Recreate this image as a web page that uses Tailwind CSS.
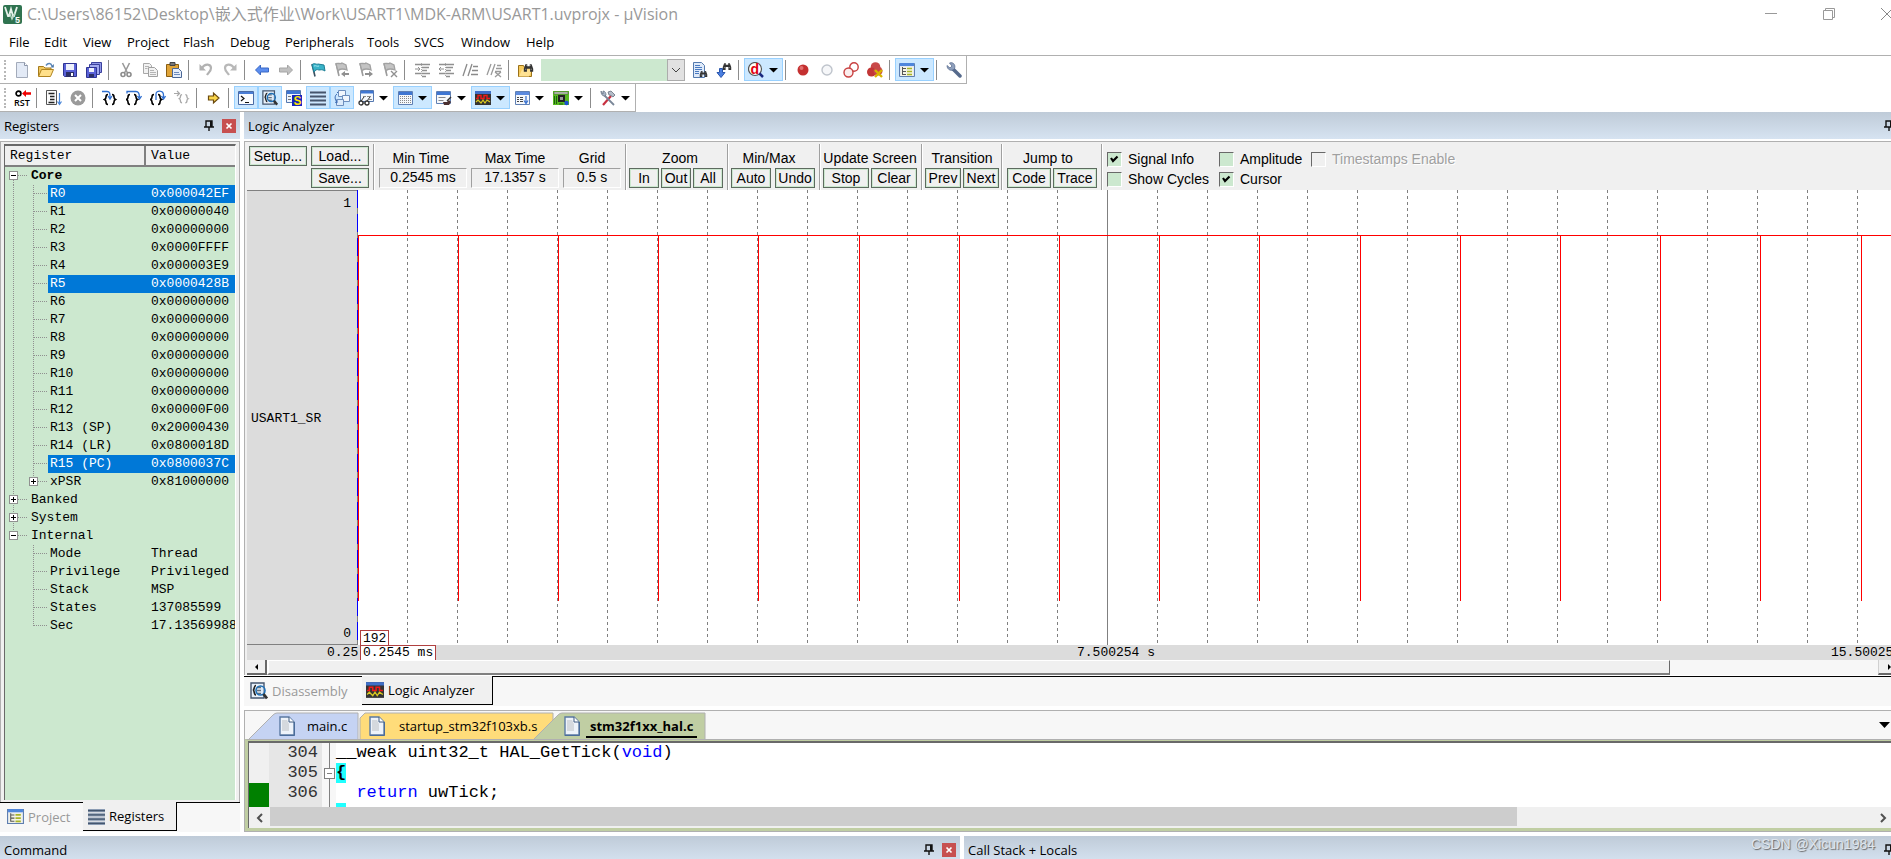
<!doctype html>
<html lang="en">
  <head>
    <meta charset="UTF-8" />
    <meta name="viewport" content="width=device-width, initial-scale=1.0" />
    <title>USART1.uvprojx - µVision</title>
    <script src="https://cdn.jsdelivr.net/npm/@tailwindcss/browser@4"></script>
  </head>
  <body
    class="flex h-screen flex-col overflow-hidden bg-white font-['Open_Sans','Noto_Sans_CJK_SC',sans-serif] text-[13px] leading-5 text-black"
  >
    <!-- Icon sprite -->
    <svg class="hidden">
      <symbol id="i-arrow" viewBox="0 0 15 16"><path d="M5 6h9l-4.500 4.500z" fill="#000" /></symbol>
      <symbol id="i-pin" viewBox="0 0 10 12"><path d="M2 1h6v6H2zM0 7h10M5 7v4" fill="none" stroke="#111" stroke-width="1.4" /><path d="M6 1h2v6H6z" fill="#111" /></symbol>
      <symbol id="i-close" viewBox="0 0 14 14"><path d="M0 0h14v14H0z" fill="#c75050" /><path d="M4.500 4.500l5 5M9.500 4.500l-5 5" stroke="#fff" stroke-width="1.7" /></symbol>
      <symbol id="i-new" viewBox="0 0 16 16"><path d="M2.500 .5h8l3 3v12h-11z" fill="#e3eaf6" stroke="#a3abba" /><path d="M10.500 .5v3h3" fill="#fff" stroke="#8b94a8" /></symbol>
      <symbol id="i-open" viewBox="0 0 16 16"><path d="M.5 14V4.500h5l1.500 1.500h6v3" fill="#f0c860" stroke="#a57a1c" /><path d="M.5 14.500l3-7h12l-3 7z" fill="#ffe08a" stroke="#b08420" /><path d="M8 3.500c2-3 5-2.500 6 .5" fill="none" stroke="#5a86b8" stroke-width="1.400" /><path d="M15.800 2v3.500h-3.500z" fill="#4a76a8" /></symbol>
      <symbol id="i-save" viewBox="0 0 16 16"><path d="M1.500 1.500h13v13h-12l-1-1z" fill="#5a62d8" stroke="#2e3493" /><path d="M4 2h8v6H4z" fill="#eef1fb" /><path d="M4 10h8v5H4z" fill="#2c2f66" /><path d="M9 11h2v3H9z" fill="#fff" /></symbol>
      <symbol id="i-saveall" viewBox="0 0 16 16"><path d="M5.500.5h10v10h-10z" fill="#8f97e6" stroke="#3b409c" /><path d="M3.500 2.500h10v10h-10z" fill="#a3aaf0" stroke="#3b409c" /><path d="M.5 5.500h10v10h-10z" fill="#5a62d8" stroke="#2e3493" /><path d="M3 6h5v4H3z" fill="#eef1fb" /><path d="M3 12h5v3H3z" fill="#2c2f66" /></symbol>
      <symbol id="i-cut" viewBox="0 0 16 16"><path d="M4.500 1l5 10M11.500 1l-5 10" stroke="#9a9a9a" stroke-width="1.600" /><circle cx="5" cy="12.500" r="2" fill="none" stroke="#8c8c8c" stroke-width="1.600" /><circle cx="11" cy="12.500" r="2" fill="none" stroke="#8c8c8c" stroke-width="1.600" /></symbol>
      <symbol id="i-copy" viewBox="0 0 16 16"><path d="M1.500 1.500h6l2 2v8h-8z" fill="#f2f2f2" stroke="#a8a8a8" /><path d="M6.500 5.500h6l3 3v6h-9z" fill="#f2f2f2" stroke="#a0a0a0" /><path d="M3 4.500h4M3 6.500h2.500M8 8.500h4M8 10.500h6M8 12.500h6" stroke="#b4b4b4" /></symbol>
      <symbol id="i-paste" viewBox="0 0 16 16"><path d="M.5 2.500h12v12h-12z" fill="#e0a438" stroke="#8a5e12" /><path d="M4 .5h5v3H4z" fill="#777" stroke="#444" /><path d="M6.500 6.500h6l3 3v6h-9z" fill="#e6eefa" stroke="#4b6796" /><path d="M8 10.500h5M8 12.500h6" stroke="#6d8bbd" /></symbol>
      <symbol id="i-undo" viewBox="0 0 16 16"><path d="M4 6c3-5 9-4 9 0 0 3-2 4-4 7" fill="none" stroke="#b2b2b2" stroke-width="2.200" /><path d="M1.500 2v6.500H8z" fill="#b2b2b2" /></symbol>
      <symbol id="i-redo" viewBox="0 0 16 16"><path d="M12 6C9 1 3 2 3 6c0 3 2 4 4 7" fill="none" stroke="#b8b8b8" stroke-width="2.200" /><path d="M14.500 2v6.500H8z" fill="#b8b8b8" /></symbol>
      <symbol id="i-back" viewBox="0 0 16 16"><path d="M1.500 8l5-5v3h8v4h-8v3z" fill="#5b8def" stroke="#3a68c4" /></symbol>
      <symbol id="i-fwd" viewBox="0 0 16 16"><path d="M14.500 8l-5-5v3h-8v4h8v3z" fill="#c0c0c0" stroke="#a6a6a6" /></symbol>
      <symbol id="i-flag" viewBox="0 0 16 16"><path d="M2 2l3 12.500" stroke="#3a5060" stroke-width="1.600" /><path d="M2 3c2-3 4 0 6-1l6 1 1 6c-3-2-4-1-6-1-2-1-4 0-5 2z" fill="#39b3c8" stroke="#1d7f96" /><path d="M4 4c2-1 3 1 5 0" stroke="#a5e6f0" fill="none" /></symbol>
      <symbol id="i-gflag" viewBox="0 0 16 16"><path d="M2 1l3 13" stroke="#9c9c9c" stroke-width="1.600" /><path d="M2 2c2-2 4 1 6-1l4 2 1 5c-2-1-3-1-5-1S5 7 4 9z" fill="#c4c4c4" stroke="#a2a2a2" stroke-width="1.300" /></symbol>
      <symbol id="i-indent" viewBox="0 0 16 16"><path d="M1 2.500h15M8 5.500h7M8 8.500h5M1 11.500h15M8 14.500h4" stroke="#909090" stroke-width="1.300" /><path d="M1 7h5M4 5l2 2-2 2" fill="none" stroke="#909090" /><path d="M7.500 1v14" stroke="#aaa" stroke-dasharray="1 1" /></symbol>
      <symbol id="i-outdent" viewBox="0 0 16 16"><path d="M1 2.500h15M8 5.500h7M8 8.500h5M1 11.500h15M8 14.500h4" stroke="#909090" stroke-width="1.300" /><path d="M1 7h5M3 5L1 7l2 2" fill="none" stroke="#909090" /><path d="M7.500 1v14" stroke="#aaa" stroke-dasharray="1 1" /></symbol>
      <symbol id="i-comment" viewBox="0 0 16 16"><path d="M1 14L5 2M6 14l4-12M11 4.500h5M10 8.500h6M9 12.500h7" stroke="#8a8a8a" stroke-width="1.300" /></symbol>
      <symbol id="i-uncomment" viewBox="0 0 16 16"><path d="M1 13L5 2M5 13L9 2M11 3.500h4M10 6.500h6M9 9.500h6M9 10l6 5M15 10l-6 5" stroke="#9a9a9a" stroke-width="1.300" /></symbol>
      <symbol id="i-binos" viewBox="0 0 16 16"><path d="M3 2h3v3h4V2h3l2.500 7v5h-5V9h-5v5h-5V9z" fill="#333" /><path d="M2.500 10h2M11.500 10h2M4 4h1M11 4h1" stroke="#ccc" /></symbol>
      <symbol id="i-findfile" viewBox="0 0 16 16"><path d="M.5 14.500v-11h5l1 2h7v9z" fill="#f7cb5c" stroke="#9a7119" /><path d="M1 14.500l3-7h10l-3 7z" fill="#ffe293" /><use href="#i-binos" x="5" y="1" width="11" height="10" /></symbol>
      <symbol id="i-finddoc" viewBox="0 0 16 16"><path d="M1.500.5h8l3 3v12h-11z" fill="#dfeaf9" stroke="#557aae" /><path d="M3 3.500h5M3 5.500h7M3 7.500h7M3 9.500h4M3 11.500h4" stroke="#4a7ac0" /><use href="#i-binos" x="7" y="8" width="9" height="8" /></symbol>
      <symbol id="i-findnext" viewBox="0 0 16 16"><path d="M3.500 6.500h3v4h2.500L5 15.500 1 10.500h2.500z" fill="#4b7fe0" stroke="#2a56ad" /><use href="#i-binos" x="6" y="0" width="10" height="9" /></symbol>
      <symbol id="i-debug" viewBox="0 0 16 16"><circle cx="7" cy="7" r="6.500" fill="#fff" stroke="#555" stroke-width="1.200" /><path d="M11.500 11.500L15 15" stroke="#1b2a80" stroke-width="2.500" /><text x="2.500" y="12" font-family="Liberation Sans" font-size="14" font-weight="700" fill="#e00010">d</text></symbol>
      <symbol id="i-bp" viewBox="0 0 16 16"><circle cx="8" cy="8" r="5.500" fill="#c43030" /><circle cx="6.500" cy="6" r="2" fill="#e27070" /></symbol>
      <symbol id="i-bpoff" viewBox="0 0 16 16"><circle cx="8" cy="8" r="5" fill="#f6f7f9" stroke="#bfc4cc" stroke-width="1.400" /></symbol>
      <symbol id="i-bpall" viewBox="0 0 16 16"><circle cx="11" cy="5" r="4.200" fill="#fff" stroke="#c84040" stroke-width="1.400" /><circle cx="5.500" cy="10.500" r="4.500" fill="#fbeeee" stroke="#c84040" stroke-width="1.400" /></symbol>
      <symbol id="i-bpkill" viewBox="0 0 16 16"><circle cx="8.500" cy="5" r="4.800" fill="#c84848" /><circle cx="4.500" cy="10" r="4.500" fill="#c23636" /><circle cx="11" cy="9" r="4.500" fill="#c84848" /><path d="M8 8l7 7M15 8l-7 7" stroke="#d8b400" stroke-width="2.400" /></symbol>
      <symbol id="i-project" viewBox="0 0 16 16"><path d="M.5 1.500h15v13H.5z" fill="#e4e8ee" stroke="#5f7fb0" /><path d="M1 1h14v3H1z" fill="#4e86dc" /><path d="M2 5h12v9H2z" fill="#f4f4e4" /><path d="M3.500 5v8M4 6.500h3M4 9.500h3M4 12.500h3" stroke="#555" fill="none" /><path d="M8 6.500h5M8 9.500h5M8 12.500h5" stroke="#a8b428" stroke-width="1.600" /></symbol>
      <symbol id="i-wrench" viewBox="0 0 16 16"><path d="M7 7l7 7" stroke="#566a8c" stroke-width="3.500" stroke-linecap="round" /><path d="M1 3.500L4 6l2-2L3.500 1C7-.5 10 3 8.500 6.500 6 10 1 8 1 3.500z" fill="#8fa0bd" stroke="#5d7092" stroke-width=".8" /></symbol>
      <symbol id="i-rst" viewBox="0 0 18 16"><circle cx="4.500" cy="3.500" r="2.400" fill="none" stroke="#000" stroke-width="1.700" /><path d="M8 3.500l4-3.500v2.300h5v2.400h-5V7z" fill="#f00000" /><text x="0" y="15.500" font-family="Open Sans" font-size="9" font-weight="600" fill="#000">RST</text></symbol>
      <symbol id="i-run" viewBox="0 0 16 16"><path d="M.5.500h10v14H.5z" fill="#fbfbfb" stroke="#555" /><path d="M2.500 3.500h6M4 6.500h4.500M4 9.500h4.500M2.500 12.500h6" stroke="#222" stroke-width="1.400" /><path d="M13.500 3v11M11.500 11.500l2 3 2-3" fill="none" stroke="#4a86d8" stroke-width="1.200" /></symbol>
      <symbol id="i-stop" viewBox="0 0 16 16"><circle cx="8" cy="8" r="7.500" fill="#9a9a9a" /><path d="M5 5l6 6M11 5l-6 6" stroke="#fff" stroke-width="2" /></symbol>
      <symbol id="i-brace" viewBox="0 0 16 16"><path d="M5 4.500c-2 0-2 1-2 2.500S2.500 9 1.500 9.500C2.500 10 3 10.500 3 12s0 2.500 2 2.500M9 4.500c2 0 2 1 2 2.500s.5 2 1.500 2.500c-1 .5-1.500 1-1.500 2.500s0 2.500-2 2.500" fill="none" stroke="currentColor" stroke-width="1.600" /></symbol>
      <symbol id="i-stepin" viewBox="0 0 16 16"><use href="#i-brace" x="1" y="0" width="16" height="16" /><path d="M0 1.500h5c3 0 3 2 3 6M6 6l2 3 2-3" fill="none" stroke="#2f6fd0" stroke-width="1.300" /></symbol>
      <symbol id="i-stepover" viewBox="0 0 16 16"><use href="#i-brace" x="-1" y="0" width="16" height="16" /><path d="M1 3.500v-2h9c3 0 3.500 3 3.500 6M11.500 6l2 3 2-3" fill="none" stroke="#2f6fd0" stroke-width="1.300" /></symbol>
      <symbol id="i-stepout" viewBox="0 0 16 16"><use href="#i-brace" x="-1" y="0" width="16" height="16" /><path d="M6 10V4c0-4 7.500-4 7.500 1v3M11.500 6l2 3 2-3" fill="none" stroke="#2f6fd0" stroke-width="1.300" /></symbol>
      <symbol id="i-runto" viewBox="0 0 16 16"><use href="#i-brace" x="4" y="1" width="13" height="13" /><path d="M0 3.500h5M3 1l2.500 2.500L3 6" fill="none" stroke="#a8a8a8" stroke-width="1.200" /></symbol>
      <symbol id="i-next" viewBox="0 0 16 16"><path d="M2.500 6h5V3l5.500 5-5.500 5v-3h-5z" fill="#fbd64a" stroke="#6b4a10" stroke-width="1.200" /></symbol>
      <symbol id="i-console" viewBox="0 0 16 16"><path d="M.5 1.500h15v13H.5z" fill="#fbfdff" stroke="#4a6ba5" /><path d="M1 2h14v2H1z" fill="#4a7ed6" /><path d="M3 6l3 2.500L3 11" fill="none" stroke="#111" stroke-width="1.200" /><path d="M7 12.500h4" stroke="#111" /></symbol>
      <symbol id="i-disasm" viewBox="0 0 18 18"><path d="M1 1h13v15H1z" fill="#e9f1fa" stroke="#44566f" stroke-width="1.400" /><path d="M6 3.500c-2 0-1.500 3-2.500 4.500C4.500 9.500 4 13 6 13" fill="none" stroke="#222" stroke-width="1.600" /><path d="M7 5.500h4M7 8.500h4M7 11.500h4" stroke="#222" stroke-width="1.500" /><circle cx="10.500" cy="8.500" r="4.500" fill="#cfe4f7" fill-opacity=".4" stroke="#1f6fb5" stroke-width="1.600" /><path d="M13.500 12l3.500 4.500" stroke="#333" stroke-width="2.800" /></symbol>
      <symbol id="i-symbols" viewBox="0 0 16 16"><path d="M.5.500h14v12H.5z" fill="#eef4fc" stroke="#5578b0" /><path d="M1 1h13v3H1z" fill="#3f76d2" /><path d="M2 6.500h3M2 9.500h3" stroke="#777" /><path d="M6 5h10v11H6z" fill="#1722c0" /><text x="7.500" y="15" font-family="Liberation Sans" font-size="12" font-weight="700" fill="#ffe600">S</text></symbol>
      <symbol id="i-regs" viewBox="0 0 16 16"><path d="M0 1h16v3H0zM0 5h16v3H0zM0 9h16v3H0zM0 13h16v3H0z" fill="#8b9cb3" /><path d="M0 2.500h16M0 6.500h16M0 10.500h16M0 14.500h16" stroke="#44566e" stroke-width="1.200" /></symbol>
      <symbol id="i-stack" viewBox="0 0 16 16"><path d="M4.500.5h7v6h-7z" fill="#f1f6fc" stroke="#6e8fbd" /><path d="M8.500 5.500h7v6h-7z" fill="#f1f6fc" stroke="#6e8fbd" /><path d="M2.500 9.500h7v6h-7z" fill="#dcebfb" stroke="#6e8fbd" /><path d="M3 4c-3 2-2 6 0 8M3 2.500h1M1 12l2 1 0-3" fill="none" stroke="#3c6db4" /></symbol>
      <symbol id="i-watch" viewBox="0 0 16 16"><path d="M2.500.5h13v11h-13z" fill="#f4f8fd" stroke="#5578b0" /><path d="M3 1h12v2.500H3z" fill="#3f76d2" /><path d="M5 6.500h3M9 6.500h4M11 9.500h3" stroke="#888" /><circle cx="3" cy="13" r="2" fill="#fff" stroke="#333" stroke-width="1.300" /><circle cx="9" cy="13" r="2" fill="#fff" stroke="#333" stroke-width="1.300" /><path d="M3 11l3-4M9 11l3-4M5 13h2" stroke="#333" /></symbol>
      <symbol id="i-memory" viewBox="0 0 16 16"><path d="M1.500 1.500h14v13h-14z" fill="#f6f8fb" stroke="#6080b4" /><path d="M2 2h13v3H2z" fill="#3f76d2" /><path d="M3 6.500h11M3 8.500h11M3 10.500h11M3 12.500h11" stroke="#888" stroke-dasharray="1 1" /></symbol>
      <symbol id="i-serial" viewBox="0 0 16 16"><path d="M.5 1.500h14v12H.5z" fill="#f6f8fb" stroke="#6080b4" /><path d="M1 2h13v3H1z" fill="#3f76d2" /><path d="M2.500 7.500h7M2.500 10.500h5" stroke="#888" /><path d="M15 7l-4 4" stroke="#333" stroke-width="1.500" /><path d="M7 12h4l2-2 2 2-2 3H8z" fill="#4a3030" /></symbol>
      <symbol id="i-analyzer" viewBox="0 0 16 16"><path d="M0 1h16v14H0z" fill="#333" /><path d="M0 1h16v3H0z" fill="#3f6fc8" /><path d="M1 8.500h2v-3h3v3h3v-3h3v3h3" fill="none" stroke="#f01818" stroke-width="1.400" /><path d="M1 12l2-2 3 3 2-3 2 3 2-3 3 2" fill="none" stroke="#d8c820" stroke-width="1.200" /></symbol>
      <symbol id="i-trace" viewBox="0 0 16 16"><path d="M1.500 1.500h14v13h-14z" fill="#f6f8fb" stroke="#6080b4" /><path d="M2 2h13v3H2z" fill="#5c8ade" /><path d="M3 7.500h2M3 9.500h2M3 11.500h2M6 7.500h3M6 9.500h3M6 11.500h3" stroke="#444" /><path d="M12 6v7M10 10.500l2 3 2-3" fill="none" stroke="#3f76d2" stroke-width="1.300" /></symbol>
      <symbol id="i-sysview" viewBox="0 0 16 16"><path d="M0 1h16v14H0z" fill="#58b820" /><path d="M1 2h14v2H1z" fill="#cfd8c8" stroke="#555" stroke-width=".6" /><path d="M5 5h7v7H5z" fill="#222" /><path d="M7 7h3v3H7z" fill="#999" /><path d="M1.500 6v8M3.500 6v8M6 14h4" stroke="#1c6410" /><circle cx="13.500" cy="13" r="2.200" fill="#1a50d0" /></symbol>
      <symbol id="i-tools" viewBox="0 0 16 16"><path d="M3 15l8-9" stroke="#c83040" stroke-width="2.200" /><path d="M8 2l3-1 4 4-2 2-2-1.500L9 5z" fill="#b4bcc8" stroke="#66707f" stroke-width=".8" /><path d="M4 5l10 10" stroke="#7a8798" stroke-width="1.800" /><path d="M1 1c0 3 1 5 4 5l1-1c0-2-1-4-3-4v3z" fill="#a9b5c6" stroke="#6b7788" stroke-width=".8" /></symbol>
      <symbol id="i-cfile" viewBox="0 0 16 20"><path d="M1 1h9l5 5v13H1z" fill="#eef3fa" stroke="#5b7aa3" stroke-width="1.400" /><path d="M10 1v5h5" fill="#fff" stroke="#3f5a80" /><path d="M3 4h5l2 4v7H3z" fill="#d5d9de" /><path d="M15.500 6v13.500H1" fill="none" stroke="#4a6c9a" /></symbol>
    </svg>

    <!-- Title bar -->
    <header class="flex h-7 shrink-0 items-center gap-1 overflow-hidden pl-[3px] text-[16px] text-[#999]">
      <svg class="size-[19px] shrink-0" viewBox="0 0 19 19">
        <rect width="19" height="19" rx="2" fill="#2f7350" />
        <path d="M2 2l3 9h1l2-7 2 7h1l3-9" fill="none" stroke="#e8f2ec" stroke-width="1.800" />
        <path d="M7 9l2 5 3-6" fill="none" stroke="#bcd8c8" stroke-width="1.400" />
        <text x="12" y="17.500" font-family="Liberation Sans" font-size="9" font-weight="700" fill="#fff">5</text>
      </svg>
      <h1 class="pl-px whitespace-nowrap">C:\Users\86152\Desktop\嵌入式作业\Work\USART1\MDK-ARM\USART1.uvprojx - µVision</h1>
      <div class="-mr-[25px] ml-auto flex shrink-0">
        <button title="Minimize" class="grid w-[58px] place-items-center">
          <svg class="size-3" viewBox="0 0 12 12"><path d="M0 5h12v1H0z" fill="#999" /></svg>
        </button>
        <button title="Restore" class="grid w-[58px] place-items-center">
          <svg class="size-3" viewBox="0 0 12 12"><path d="M.5 2.500h9v9h-9zM2.500 2V.5h9v9H10" fill="none" stroke="#999" /></svg>
        </button>
        <button title="Close" class="grid w-[58px] place-items-center">
          <svg class="size-3" viewBox="0 0 12 12"><path d="M0 0l12 12M12 0L0 12" stroke="#888" /></svg>
        </button>
      </div>
    </header>

    <!-- Menu bar -->
    <nav class="flex h-7 shrink-0 items-center border-b border-[#b0b0b0]">
      <button class="w-9 pl-[9px] text-left">File</button>
      <button class="ml-2 w-[39px] text-left">Edit</button>
      <button class="w-11 text-left">View</button>
      <button class="w-14 text-left">Project</button>
      <button class="w-[47px] text-left">Flash</button>
      <button class="w-[55px] text-left">Debug</button>
      <button class="w-[82px] text-left">Peripherals</button>
      <button class="w-[47px] text-left">Tools</button>
      <button class="w-[47px] text-left">SVCS</button>
      <button class="w-[65px] text-left">Window</button>
      <button class="text-left">Help</button>
    </nav>

    <!-- File toolbar -->
    <div
      class="flex h-7 w-fit shrink-0 items-center border-r border-b border-[#b0b0b0] [&>button]:flex [&>button]:h-[23px] [&>button]:items-center [&>button]:border [&>button]:px-[3px] [&>i]:ml-[2px] [&>i]:mr-[5px] [&>i]:h-5 [&>i]:w-px [&>i]:bg-[#8c8c8c]"
    >
      <span class="ml-1 mr-1 h-5 w-0.5 border-l-2 border-dotted border-[#b8b8b8]"></span>
      <button title="New" class="border-transparent"><svg class="size-4"><use href="#i-new" /></svg></button>
      <button title="Open" class="border-transparent"><svg class="size-4"><use href="#i-open" /></svg></button>
      <button title="Save" class="border-transparent"><svg class="size-4"><use href="#i-save" /></svg></button>
      <button title="Save All" class="border-transparent"><svg class="size-4"><use href="#i-saveall" /></svg></button>
      <i></i>
      <button title="Cut" class="border-transparent"><svg class="size-4"><use href="#i-cut" /></svg></button>
      <button title="Copy" class="border-transparent"><svg class="size-4"><use href="#i-copy" /></svg></button>
      <button title="Paste" class="border-transparent"><svg class="size-4"><use href="#i-paste" /></svg></button>
      <i></i>
      <button title="Undo" class="border-transparent"><svg class="size-4"><use href="#i-undo" /></svg></button>
      <button title="Redo" class="border-transparent"><svg class="size-4"><use href="#i-redo" /></svg></button>
      <i></i>
      <button title="Navigate Backwards" class="border-transparent"><svg class="size-4"><use href="#i-back" /></svg></button>
      <button title="Navigate Forwards" class="border-transparent"><svg class="size-4"><use href="#i-fwd" /></svg></button>
      <i></i>
      <button title="Toggle Bookmark" class="border-transparent"><svg class="size-4"><use href="#i-flag" /></svg></button>
      <button title="Previous Bookmark" class="border-transparent">
        <svg class="size-4" viewBox="0 0 16 16"><use href="#i-gflag" /><path d="M7 12l4-3v2h4v2h-4v2z" fill="#909090" /></svg>
      </button>
      <button title="Next Bookmark" class="border-transparent">
        <svg class="size-4" viewBox="0 0 16 16"><use href="#i-gflag" /><path d="M15 12l-4-3v2H7v2h4v2z" fill="#909090" /></svg>
      </button>
      <button title="Clear Bookmarks" class="border-transparent">
        <svg class="size-4" viewBox="0 0 16 16"><use href="#i-gflag" /><path d="M9 9l6 6M15 9l-6 6" stroke="#909090" stroke-width="1.400" /></svg>
      </button>
      <i></i>
      <button title="Indent" class="border-transparent"><svg class="size-4"><use href="#i-indent" /></svg></button>
      <button title="Unindent" class="border-transparent"><svg class="size-4"><use href="#i-outdent" /></svg></button>
      <button title="Comment" class="border-transparent"><svg class="size-4"><use href="#i-comment" /></svg></button>
      <button title="Uncomment" class="border-transparent"><svg class="size-4"><use href="#i-uncomment" /></svg></button>
      <i></i>
      <button title="Find in Files" class="border-transparent"><svg class="size-4"><use href="#i-findfile" /></svg></button>
      <div class="relative mx-[3px] h-[22px] w-36">
        <select title="Find" class="size-full appearance-none bg-[#cce8cf]"></select>
        <span class="pointer-events-none absolute inset-y-0 right-0 grid w-[18px] place-items-center border border-[#acacac] bg-[#e1e1e1]">
          <svg class="h-2 w-[10px]" viewBox="0 0 10 8"><path d="M1 2l4 4 4-4" fill="none" stroke="#444" /></svg>
        </span>
      </div>
      <button title="Find" class="border-transparent"><svg class="size-4"><use href="#i-finddoc" /></svg></button>
      <button title="Incremental Find" class="border-transparent"><svg class="size-4"><use href="#i-findnext" /></svg></button>
      <i></i>
      <button title="Debug Session" class="border-[#99d1ff] bg-[#cce8ff]"><svg class="size-4"><use href="#i-debug" /></svg><svg class="h-4 w-[15px]"><use href="#i-arrow" /></svg></button>
      <i></i>
      <button title="Breakpoint" class="border-transparent"><svg class="size-4"><use href="#i-bp" /></svg></button>
      <button title="Disable Breakpoint" class="border-transparent"><svg class="size-4"><use href="#i-bpoff" /></svg></button>
      <button title="Disable All" class="border-transparent"><svg class="size-4"><use href="#i-bpall" /></svg></button>
      <button title="Kill All" class="border-transparent"><svg class="size-4"><use href="#i-bpkill" /></svg></button>
      <i></i>
      <button title="Project Window" class="border-[#99d1ff] bg-[#cce8ff]"><svg class="size-4"><use href="#i-project" /></svg><svg class="h-4 w-[15px]"><use href="#i-arrow" /></svg></button>
      <i></i>
      <button title="Configuration" class="border-transparent"><svg class="size-4"><use href="#i-wrench" /></svg></button>
    </div>

    <!-- Debug toolbar -->
    <div
      class="flex h-7 w-fit shrink-0 items-center border-r border-b border-[#b0b0b0] [&>button]:flex [&>button]:h-[23px] [&>button]:items-center [&>button]:border [&>button]:px-[3px] [&>i]:ml-[2px] [&>i]:mr-[5px] [&>i]:h-5 [&>i]:w-px [&>i]:bg-[#8c8c8c]"
    >
      <span class="ml-1 mr-1 h-5 w-0.5 border-l-2 border-dotted border-[#b8b8b8]"></span>
      <button title="Reset" class="border-transparent"><svg class="size-4 overflow-visible"><use href="#i-rst" width="18" height="16" /></svg></button>
      <i></i>
      <button title="Run" class="border-transparent"><svg class="size-4"><use href="#i-run" /></svg></button>
      <button title="Stop" class="border-transparent"><svg class="size-4"><use href="#i-stop" /></svg></button>
      <i></i>
      <button title="Step" class="border-transparent"><svg class="size-4"><use href="#i-stepin" /></svg></button>
      <button title="Step Over" class="border-transparent"><svg class="size-4"><use href="#i-stepover" /></svg></button>
      <button title="Step Out" class="border-transparent"><svg class="size-4"><use href="#i-stepout" /></svg></button>
      <button title="Run to Cursor" class="border-transparent text-[#a8a8a8]"><svg class="size-4"><use href="#i-runto" /></svg></button>
      <i></i>
      <button title="Show Next Statement" class="border-transparent"><svg class="size-4"><use href="#i-next" /></svg></button>
      <i></i>
      <button title="Command Window" class="border-[#99d1ff] bg-[#cce8ff]"><svg class="size-4"><use href="#i-console" /></svg></button>
      <button title="Disassembly Window" class="border-[#99d1ff] bg-[#cce8ff]"><svg class="size-4"><use href="#i-disasm" /></svg></button>
      <button title="Symbols Window" class="border-transparent"><svg class="size-4"><use href="#i-symbols" /></svg></button>
      <button title="Registers Window" class="border-[#99d1ff] bg-[#cce8ff]"><svg class="size-4"><use href="#i-regs" /></svg></button>
      <button title="Call Stack Window" class="border-[#99d1ff] bg-[#cce8ff]"><svg class="size-4"><use href="#i-stack" /></svg></button>
      <button title="Watch Windows" class="border-transparent"><svg class="size-4"><use href="#i-watch" /></svg><svg class="h-4 w-[15px]"><use href="#i-arrow" /></svg></button>
      <button title="Memory Windows" class="border-[#99d1ff] bg-[#cce8ff]"><svg class="size-4"><use href="#i-memory" /></svg><svg class="h-4 w-[15px]"><use href="#i-arrow" /></svg></button>
      <button title="Serial Windows" class="border-transparent"><svg class="size-4"><use href="#i-serial" /></svg><svg class="h-4 w-[15px]"><use href="#i-arrow" /></svg></button>
      <button title="Analysis Windows" class="border-[#99d1ff] bg-[#cce8ff]"><svg class="size-4"><use href="#i-analyzer" /></svg><svg class="h-4 w-[15px]"><use href="#i-arrow" /></svg></button>
      <button title="Trace Windows" class="border-transparent"><svg class="size-4"><use href="#i-trace" /></svg><svg class="h-4 w-[15px]"><use href="#i-arrow" /></svg></button>
      <button title="System Viewer" class="border-transparent"><svg class="size-4"><use href="#i-sysview" /></svg><svg class="h-4 w-[15px]"><use href="#i-arrow" /></svg></button>
      <i></i>
      <button title="Toolbox" class="border-transparent"><svg class="size-4"><use href="#i-tools" /></svg><svg class="h-4 w-[15px]"><use href="#i-arrow" /></svg></button>
    </div>

    <!-- Docked windows -->
    <main class="flex min-h-0 flex-1 gap-1">
      <!-- Registers -->
      <aside class="flex w-60 shrink-0 flex-col">
        <div class="flex h-[27px] shrink-0 items-center bg-linear-to-b from-[#bfcbd8] to-[#d6e3f1] pr-1 pl-1">
          <h2 class="flex-1 leading-5">Registers</h2>
          <button title="Auto Hide"><svg class="h-3 w-[10px]"><use href="#i-pin" /></svg></button>
          <button title="Close" class="ml-2"><svg class="size-[14px]"><use href="#i-close" /></svg></button>
        </div>
        <div class="mt-[2px] flex min-h-0 flex-1 flex-col border border-b-0 border-[#b0b0b0] bg-[#f0f0f0] px-[3px] pt-[2px] pb-0.5">
          <div class="min-h-0 flex-1 overflow-hidden border-t-2 border-r border-l border-t-[#696969] border-r-white border-l-[#696969] bg-[#cce8cf]">
            <table class="w-full table-fixed border-collapse font-['Liberation_Mono','Noto_Sans_CJK_SC',monospace] text-[13px] leading-[18px]">
              <thead>
                <tr class="h-5 bg-[#f0f0f0] text-left">
                  <th class="w-[140px] border-r-2 border-b-2 border-[#808080] py-0 pl-[5px] font-normal">Register</th>
                  <th class="border-b-2 border-[#808080] py-0 pl-[5px] font-normal">Value</th>
                </tr>
              </thead>
              <tbody id="registerRows"></tbody>
            </table>
          </div>
        </div>
        <div class="mb-1 flex h-[30px] shrink-0 bg-[#f7f7f7]">
          <button class="flex w-[83px] items-center gap-1 border-t border-black pb-0.5 pl-[7px] text-[#999]">
            <svg class="size-[17px]"><use href="#i-project" /></svg>Project
          </button>
          <button class="mb-px flex w-[94px] items-center gap-1 border-r border-b border-black bg-[#f0f0f0] pl-[5px]">
            <svg class="size-[17px]"><use href="#i-regs" /></svg>Registers
          </button>
          <span class="flex-1 border-t border-black"></span>
        </div>
      </aside>

      <div class="flex min-w-0 flex-1 flex-col">
        <!-- Logic Analyzer -->
        <section class="flex min-h-0 flex-1 flex-col">
          <div class="flex h-[27px] shrink-0 items-center overflow-hidden bg-linear-to-b from-[#bfcbd8] to-[#d6e3f1] pl-1">
            <h2 class="flex-1 leading-5">Logic Analyzer</h2>
            <button title="Auto Hide" class="-mr-[3px]"><svg class="h-3 w-[10px]"><use href="#i-pin" /></svg></button>
          </div>
          <div class="mt-[2px] flex min-h-0 flex-1 flex-col border-t border-l border-[#b0b0b0] bg-[#f0f0f0] font-['Liberation_Sans',sans-serif] text-[14px]">
            <div
              class="flex h-12 shrink-0 [&>i]:mt-0.5 [&>i]:w-0.5 [&>i]:border-r [&>i]:border-l [&>i]:border-r-white [&>i]:border-l-[#a0a0a0] [&_button]:h-5 [&_button]:border [&_button]:border-[#5d6b5f] [&_button]:leading-[17px] [&_button]:shadow-[inset_0_0_0_1px_#cce8cf]"
            >
              <div class="grid grid-cols-[58px_58px] content-start gap-x-1 gap-y-0.5 px-1 pt-1">
                <button>Setup...</button>
                <button>Load...</button>
                <button class="col-start-2">Save...</button>
              </div>
              <i></i>
              <dl class="flex gap-1 px-1 pt-[7px] text-center leading-[18px]">
                <div class="w-[88px]">
                  <dt class="pr-1 pb-px">Min Time</dt>
                  <dd class="h-5 border border-t-[#a0a0a0] border-r-white border-b-white border-l-[#a0a0a0] leading-[17px]">0.2545 ms</dd>
                </div>
                <div class="w-[88px]">
                  <dt class="pb-px">Max Time</dt>
                  <dd class="h-5 border border-t-[#a0a0a0] border-r-white border-b-white border-l-[#a0a0a0] leading-[17px]">17.1357 s</dd>
                </div>
                <div class="w-[58px]">
                  <dt class="pb-px">Grid</dt>
                  <dd class="h-5 border border-t-[#a0a0a0] border-r-white border-b-white border-l-[#a0a0a0] leading-[17px]">0.5 s</dd>
                </div>
              </dl>
              <i></i>
              <div class="pt-[7px] pr-1 pl-0.5 text-center">
                <p class="pb-px pl-2 leading-[18px]">Zoom</p>
                <div class="flex gap-0.5">
                  <button class="w-[30px]">In</button>
                  <button class="w-[30px]">Out</button>
                  <button class="w-[30px]">All</button>
                </div>
              </div>
              <i></i>
              <div class="pt-[7px] pr-1 pl-0.5 text-center">
                <p class="pr-2 pb-px leading-[18px]">Min/Max</p>
                <div class="flex gap-1">
                  <button class="w-10">Auto</button>
                  <button class="w-10">Undo</button>
                </div>
              </div>
              <i></i>
              <div class="pt-[7px] pr-1 pl-0.5 text-center">
                <p class="pb-px leading-[18px]">Update Screen</p>
                <div class="flex gap-0.5">
                  <button class="w-[46px]">Stop</button>
                  <button class="w-[46px]">Clear</button>
                </div>
              </div>
              <i></i>
              <div class="pt-[7px] pr-0.5 pl-0.5 text-center">
                <p class="pb-px leading-[18px]">Transition</p>
                <div class="flex gap-0.5">
                  <button class="w-9">Prev</button>
                  <button class="w-9">Next</button>
                </div>
              </div>
              <i></i>
              <div class="pt-[7px] pr-1 pl-1 text-center">
                <p class="pr-2 pb-px leading-[18px]">Jump to</p>
                <div class="flex gap-0.5">
                  <button class="w-11">Code</button>
                  <button class="w-11">Trace</button>
                </div>
              </div>
              <i></i>
              <div
                class="grid grid-cols-[112px_92px_auto] content-start pt-[7px] pl-1 leading-5 [&_input]:absolute [&_input]:inset-0 [&_input]:appearance-none [&_label]:flex [&_label]:h-5 [&_label]:items-center [&_label]:gap-1.5 [&_svg]:pointer-events-none [&_svg]:relative [&_svg]:size-full [&_span]:relative [&_span]:size-[15px] [&_span]:border [&_span]:border-t-[#696969] [&_span]:border-l-[#696969] [&_span]:border-r-white [&_span]:border-b-white"
              >
                <label>
                  <span class="bg-[#cce8cf]"><input type="checkbox" checked /><svg viewBox="0 0 13 13"><path d="M3 5l2 3 4.500-4.500" fill="none" stroke="#000" stroke-width="2.200" /></svg></span>
                  Signal Info
                </label>
                <label><span class="bg-[#cce8cf]"><input type="checkbox" /></span>Amplitude</label>
                <label class="whitespace-nowrap text-[#a0a0a0] [text-shadow:1px_1px_0_#fff]"><span class="bg-[#f0f0f0]"><input type="checkbox" disabled /></span>Timestamps Enable</label>
                <label><span class="bg-[#cce8cf]"><input type="checkbox" /></span>Show Cycles</label>
                <label>
                  <span class="bg-[#cce8cf]"><input type="checkbox" checked /><svg viewBox="0 0 13 13"><path d="M3 5l2 3 4.500-4.500" fill="none" stroke="#000" stroke-width="2.200" /></svg></span>
                  Cursor
                </label>
              </div>
            </div>

            <!-- Waveform -->
            <div class="relative ml-0.5 flex min-h-0 flex-1 flex-col font-['Liberation_Mono',monospace] text-[13px]">
              <div class="flex min-h-0 flex-1">
                <div class="flex w-[110px] flex-col justify-between border-t border-b border-[#808080] bg-[#dcdcdc] pt-[3px]">
                  <span class="pr-1.5 text-right">1</span>
                  <span class="pl-1">USART1_SR</span>
                  <span class="pr-1.5 text-right">0</span>
                </div>
                <svg class="h-full min-w-0 flex-1 bg-white" shape-rendering="crispEdges">
                  <defs>
                    <pattern id="grid" width="50" height="6" patternUnits="userSpaceOnUse"><rect width="1" height="3" fill="#808080" /></pattern>
                    <pattern id="cursor" width="1" height="24" patternUnits="userSpaceOnUse"><rect width="1" height="24" fill="#808080" /><rect width="1" height="18" fill="#0000ff" /></pattern>
                  </defs>
                  <rect x="1" width="100%" height="100%" fill="url(#grid)" />
                  <rect x="750" width="1" height="100%" fill="#808080" />
                  <rect width="1" height="100%" fill="url(#cursor)" />
                  <rect x="1" y="45" width="100%" height="1" fill="#ff0000" />
                  <path
                    d="M1 45h1v366h-1zM101 45h1v366h-1zM201 45h1v366h-1zM301 45h1v366h-1zM401 45h1v366h-1zM502 45h1v366h-1zM602 45h1v366h-1zM702 45h1v366h-1zM802 45h1v366h-1zM902 45h1v366h-1zM1003 45h1v366h-1zM1103 45h1v366h-1zM1203 45h1v366h-1zM1303 45h1v366h-1zM1403 45h1v366h-1zM1504 45h1v366h-1z"
                    fill="#ff0000"
                  />
                </svg>
              </div>
              <div class="relative h-[15px] shrink-0 overflow-hidden bg-[#dcdcdc] leading-[15px] whitespace-nowrap">
                <span class="absolute left-20">0.25</span>
                <span class="absolute left-[830px]">7.500254 s</span>
                <span class="absolute left-[1584px]">15.50025</span>
              </div>
              <!-- Cursor readout -->
              <span class="absolute bottom-[29px] left-[113px] h-4 border border-[#b04040] bg-white px-0.5 leading-[15px]">192</span>
              <span class="absolute bottom-[15px] left-[113px] h-[15px] border border-b-0 border-[#b04040] bg-white px-0.5 leading-[14px]">0.2545 ms</span>
              <div class="flex h-[15px] shrink-0">
                <button title="Scroll Left" class="grid w-5 place-items-center border-r-2 border-b-2 border-[#696969] bg-[#f0f0f0]">
                  <svg class="h-[6px] w-[3px]" viewBox="0 0 3 6"><path d="M3 0v6L0 3z" /></svg>
                </button>
                <span class="flex-[1402] border-t border-r border-b-2 border-l-2 border-t-white border-r-[#696969] border-b-[#808080] border-l-white bg-[#f0f0f0]"></span>
                <span class="flex-[208] bg-[#f7f7f7]"></span>
                <button title="Scroll Right" class="grid w-[13px] place-items-center border-b-2 border-l border-[#696969] border-l-[#d0d0d0] bg-[#f0f0f0] pl-[9px]">
                  <svg class="h-[6px] w-[3px]" viewBox="0 0 3 6"><path d="M0 0v6l3-3z" /></svg>
                </button>
              </div>
            </div>
          </div>
          <div class="mt-px flex h-[30px] shrink-0 bg-[#f7f7f7]">
            <button class="flex w-[118px] items-center gap-1 border-t border-black pb-0.5 pl-1.5 text-[#999]">
              <svg class="size-[18px]"><use href="#i-disasm" /></svg>Disassembly
            </button>
            <button class="mb-px flex w-[131px] items-center gap-1 border-r border-b border-black bg-[#f0f0f0] pl-1">
              <svg class="size-[18px]"><use href="#i-analyzer" /></svg>Logic Analyzer
            </button>
            <span class="flex-1 border-t border-black"></span>
          </div>
        </section>

        <!-- Source editor -->
        <section class="mt-1 mb-1 flex shrink-0 flex-col border border-r-0 border-[#b0b0b0] bg-[#f7f7f7]">
          <div class="flex h-7 items-end pl-1">
            <button class="relative flex h-[27px] w-[110px] items-center pl-[30px]">
              <svg class="absolute inset-0 size-full" viewBox="0 0 110 27"><path d="M0 27L24 3q2-2 4-2h81v26" fill="#c5d3f3" stroke="#b0b0b0" /></svg>
              <svg class="relative mr-3 h-5 w-4"><use href="#i-cfile" /></svg>
              <span class="relative">main.c</span>
            </button>
            <button class="relative flex h-[27px] w-[195px] items-center pl-[10px]">
              <svg class="absolute inset-0 size-full" viewBox="0 0 195 27"><path d="M1 27V6l5-5h188v26" fill="#ffdc7a" stroke="#b0b0b0" /></svg>
              <svg class="relative mr-[14px] h-5 w-4"><use href="#i-cfile" /></svg>
              <span class="relative">startup_stm32f103xb.s</span>
            </button>
            <button class="relative -ml-5 flex h-[27px] w-[172px] items-center pl-[30px] font-bold">
              <svg class="absolute inset-0 size-full" viewBox="0 0 172 27"><path d="M0 27L24 3q2-2 4-2h143v26" fill="#c0cea3" stroke="#b0b0b0" /></svg>
              <svg class="relative mr-[6px] h-5 w-4"><use href="#i-cfile" /></svg>
              <span class="relative h-[25px] border-b-2 border-black px-1 leading-[26px]">stm32f1xx_hal.c</span>
            </button>
            <button title="Open Files" class="mb-2 ml-auto"><svg class="h-3 w-[13px]" viewBox="0 0 13 12"><path d="M1 3h11L6.500 9z" /></svg></button>
          </div>
          <div class="border-t border-b-[3px] border-l-[3px] border-t-[#b0b0b0] border-b-[#c0cea3] border-l-[#c0cea3] bg-[#c0cea3] pt-px">
            <div class="border-t-2 border-l border-[#696969]">
              <!-- Code lines -->
              <div class="grid h-16 grid-cols-[20px_53px_14px_1fr] grid-rows-[20px_20px_20px_4px] overflow-hidden bg-white font-['Liberation_Mono',monospace] text-[17px] leading-5">
                <div class="col-start-1 row-start-1 row-end-3 bg-[#f0f0f0]"></div>
                <div class="col-start-1 row-start-3 row-end-5 bg-[#008000]"></div>
                <div class="col-start-2 row-start-1 row-end-5 bg-[#e6e6e6] pr-1 text-right text-[#333]">304<br />305<br />306</div>
                <div class="col-start-3 row-start-1 row-end-5 bg-[#f7f7f7]">
                  <svg class="h-16 w-[14px]" shape-rendering="crispEdges">
                    <path d="M7 0h1v64h-1z" fill="#808080" />
                    <path d="M2 25h11v11h-11z" fill="#808080" />
                    <path d="M3 26h9v9h-9z" fill="#fff" />
                    <path d="M5 30h5v1h-5z" fill="#808080" />
                  </svg>
                </div>
                <pre class="col-start-4 row-start-1 font-['Liberation_Mono',monospace]">__weak uint32_t HAL_GetTick(<span class="text-[#0000ff]">void</span>)</pre>
                <pre class="col-start-4 row-start-2 font-['Liberation_Mono',monospace]"><b class="inline-block h-5 bg-[#20ffff]">{</b></pre>
                <pre class="col-start-4 row-start-3 font-['Liberation_Mono',monospace]">  <span class="text-[#0000ff]">return</span> uwTick;</pre>
                <div class="col-start-4 row-start-4 w-[10px] bg-[#20ffff]"></div>
              </div>
              <div class="flex h-[21px] items-center bg-[#f0f0f0]">
                <button title="Scroll Left" class="grid w-[21px] place-items-center">
                  <svg class="h-[10px] w-[7px]" viewBox="0 0 7 10"><path d="M6 1L2 5l4 4" fill="none" stroke="#505050" stroke-width="2" /></svg>
                </button>
                <span class="mb-0.5 h-[19px] flex-[1247] bg-[#cdcdcd]"></span>
                <span class="flex-[358]"></span>
                <button title="Scroll Right" class="grid w-4 place-items-center">
                  <svg class="h-[10px] w-[7px]" viewBox="0 0 7 10"><path d="M1 1l4 4-4 4" fill="none" stroke="#505050" stroke-width="2" /></svg>
                </button>
              </div>
            </div>
          </div>
        </section>
      </div>
    </main>

    <!-- Bottom docks -->
    <footer class="relative flex h-[23px] shrink-0 gap-1 overflow-hidden">
      <div class="flex h-[27px] w-[960px] items-center bg-linear-to-b from-[#bfcbd8] to-[#d6e3f1] px-1">
        <h2 class="flex-1 leading-5">Command</h2>
        <button title="Auto Hide"><svg class="h-3 w-[10px]"><use href="#i-pin" /></svg></button>
        <button title="Close" class="ml-2"><svg class="size-[14px]"><use href="#i-close" /></svg></button>
      </div>
      <div class="flex h-[27px] flex-1 items-center bg-linear-to-b from-[#bfcbd8] to-[#d6e3f1] pl-1">
        <h2 class="flex-1 leading-5">Call Stack + Locals</h2>
        <button title="Auto Hide" class="-mr-[3px]"><svg class="h-3 w-[10px]"><use href="#i-pin" /></svg></button>
      </div>
      <span class="absolute top-0 right-4 font-['Liberation_Sans',sans-serif] text-[14px] leading-4 text-[#dfe5ec] [text-shadow:1px_1px_1px_#666]">CSDN @Xicun1984</span>
    </footer>

    <script>
      // [name, value, kind, selected]
      const registers = [
        ["Core", "", "open"],
        ["R0", "0x000042EF", "core", true],
        ["R1", "0x00000040", "core"],
        ["R2", "0x00000000", "core"],
        ["R3", "0x0000FFFF", "core"],
        ["R4", "0x000003E9", "core"],
        ["R5", "0x0000428B", "core", true],
        ["R6", "0x00000000", "core"],
        ["R7", "0x00000000", "core"],
        ["R8", "0x00000000", "core"],
        ["R9", "0x00000000", "core"],
        ["R10", "0x00000000", "core"],
        ["R11", "0x00000000", "core"],
        ["R12", "0x00000F00", "core"],
        ["R13 (SP)", "0x20000430", "core"],
        ["R14 (LR)", "0x0800018D", "core"],
        ["R15 (PC)", "0x0800037C", "core", true],
        ["xPSR", "0x81000000", "psr"],
        ["Banked", "", "closed"],
        ["System", "", "closed"],
        ["Internal", "", "last"],
        ["Mode", "Thread", "internal"],
        ["Privilege", "Privileged", "internal"],
        ["Stack", "MSP", "internal"],
        ["States", "137085599", "internal"],
        ["Sec", "17.13569988", "end"],
      ];

      const line = (d) => `<path d="${d}" fill="none" stroke="#909090" stroke-dasharray="1 1"/>`;
      const box = (x, plus) =>
        `<rect x="${x}.5" y="4.5" width="8" height="8" fill="#fff" stroke="#909090"/>
         <path d="M${x + 2} 8.5h5${plus ? `M${x + 4}.5 6v5` : ""}" stroke="#000"/>`;

      // tree guides for each kind of row
      const guides = {
        open: line("M8.5 13v5M13 8.500h10") + box(4, false),
        core: line("M8.5 0v18M28.5 0v18M29 8.500h14"),
        psr: line("M8.5 0v18M28.5 0v4M33 8.500h10") + box(24, true),
        closed: line("M8.5 0v18M13 8.500h10") + box(4, true),
        last: line("M8.5 0v4M13 8.500h10") + box(4, false),
        internal: line("M28.5 0v18M29 8.500h14"),
        end: line("M28.5 0v9M29 8.500h14"),
      };

      document.getElementById("registerRows").innerHTML = registers
        .map(([name, value, kind, selected]) => {
          const root = kind === "open" || kind === "closed" || kind === "last";
          const width = root ? "w-6" : "w-[43px]";
          const tone = selected ? "bg-[#0078d7] text-white" : "";
          const weight = name === "Core" ? "font-bold" : "";
          return `<tr class="h-[18px]">
            <td class="p-0"><div class="flex h-[18px]">
              <svg class="h-[18px] shrink-0 ${width}">${guides[kind]}</svg>
              <span class="flex-1 pl-[2px] whitespace-pre ${tone} ${weight}">${name}</span>
            </div></td>
            <td class="overflow-hidden p-0"><div class="h-[18px] pl-1.5 ${tone}">${value}</div></td>
          </tr>`;
        })
        .join("");
    </script>
  </body>
</html>
